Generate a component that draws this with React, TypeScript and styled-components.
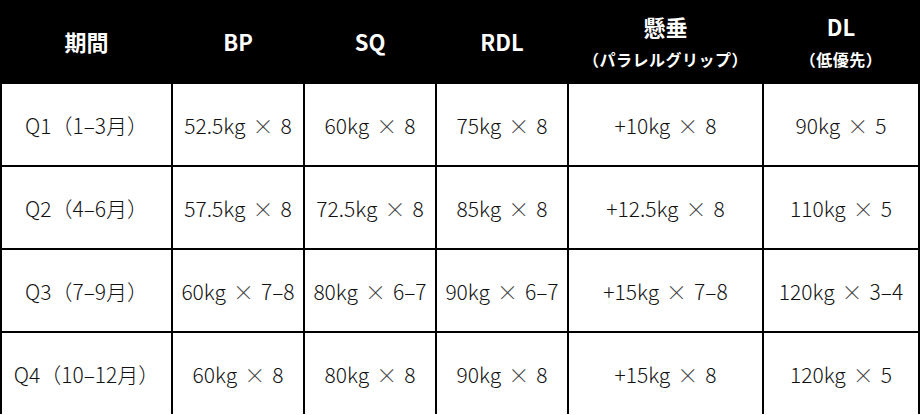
import { Fragment } from "react";
import styled, { createGlobalStyle } from "styled-components";

const GlobalStyle = createGlobalStyle`
  html, body {
    margin: 0;
    padding: 0;
    background: #ffffff;
  }
  body {
    font-family: "Noto Sans CJK JP", "Noto Sans", sans-serif;
    color: #111111;
  }
`;

type Row = {
  period: string;
  cells: string[];
};

const rows: Row[] = [
  { period: "Q1（1–3月）", cells: ["52.5kg × 8", "60kg × 8", "75kg × 8", "+10kg × 8", "90kg × 5"] },
  { period: "Q2（4–6月）", cells: ["57.5kg × 8", "72.5kg × 8", "85kg × 8", "+12.5kg × 8", "110kg × 5"] },
  { period: "Q3（7–9月）", cells: ["60kg × 7–8", "80kg × 6–7", "90kg × 6–7", "+15kg × 7–8", "120kg × 3–4"] },
  { period: "Q4（10–12月）", cells: ["60kg × 8", "80kg × 8", "90kg × 8", "+15kg × 8", "120kg × 5"] },
];

const headers: { title: string; sub?: string }[] = [
  { title: "期間" },
  { title: "BP" },
  { title: "SQ" },
  { title: "RDL" },
  { title: "懸垂", sub: "（パラレルグリップ）" },
  { title: "DL", sub: "（低優先）" },
];

const App = () => {
  return (
    <>
      <GlobalStyle />
      <Table>
        {headers.map((h) => (
          <HeadCell key={h.title}>
            <HeadTitle>{h.title}</HeadTitle>
            {h.sub && <HeadSub>{h.sub}</HeadSub>}
          </HeadCell>
        ))}
        {rows.map((r) => (
          <Fragment key={r.period}>
            <Cell>{r.period}</Cell>
            {r.cells.map((c, i) => {
              const [weight, reps] = c.split(" × ");
              return (
                <Cell key={i}>
                  {weight}
                  <Times>×</Times>
                  {reps}
                </Cell>
              );
            })}
          </Fragment>
        ))}
      </Table>
    </>
  );
};

export default App;

const Table = styled.div`
  width: 920px;
  box-sizing: border-box;
  display: grid;
  grid-template-columns: 169px 130px 130px 130px 193px 154px;
  grid-template-rows: 82px repeat(4, 81px);
  gap: 2px;
  padding: 0 2px;
  background: #000000;
`;

const HeadCell = styled.div`
  background: #000000;
  color: #ffffff;
  display: flex;
  flex-direction: column;
  align-items: center;
  justify-content: center;
  gap: 12px;
`;

const HeadTitle = styled.span`
  font-size: 22px;
  font-weight: 700;
  line-height: 24px;
`;

const HeadSub = styled.span`
  font-size: 16px;
  font-weight: 700;
  line-height: 18px;
  letter-spacing: 0.5px;
`;

const Cell = styled.div`
  background: #ffffff;
  display: flex;
  align-items: center;
  justify-content: center;
  font-size: 21px;
  font-weight: 300;
  line-height: 24px;
  white-space: nowrap;
  color: #111111;
`;

const Times = styled.span`
  margin: 0 7px;
  color: #444444;
  font-weight: 300;
`;
